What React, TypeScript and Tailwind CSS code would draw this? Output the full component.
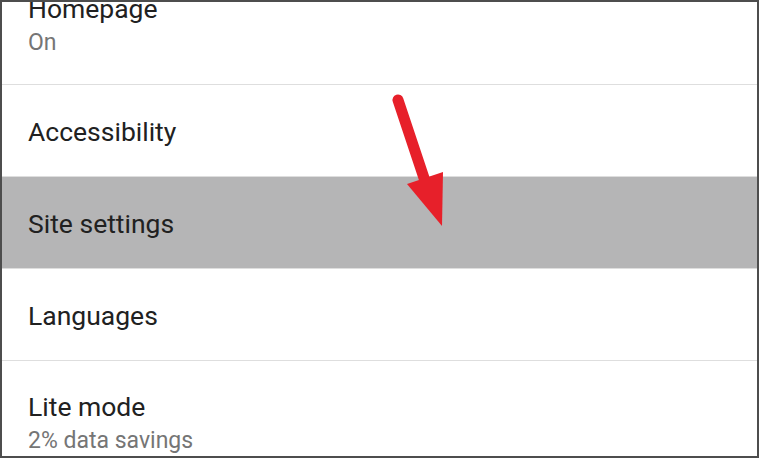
import React from 'react';

type Row = { title: string; subtitle?: string; active?: boolean };

const rows: Row[] = [
  { title: 'Homepage', subtitle: 'On' },
  { title: 'Accessibility' },
  { title: 'Site settings', active: true },
  { title: 'Languages' },
  { title: 'Lite mode', subtitle: '2% data savings' },
];

function SettingsRow({ title, subtitle, active }: Row) {
  if (subtitle) {
    return (
      <div className="h-[122px] pt-[30px] pl-[26px] border-b border-[#dedede] bg-white">
        <div className="text-[26.5px] leading-[32px] text-[#212121]">{title}</div>
        <div className="mt-[2px] text-[23px] leading-[32px] text-[#757575]">{subtitle}</div>
      </div>
    );
  }
  return (
    <div
      className={`h-[92px] pt-[31px] pl-[26px] border-b border-[#dedede] ${
        active ? 'bg-[#b5b5b6]' : 'bg-white'
      }`}
    >
      <div className="text-[26.5px] leading-[32px] text-[#212121]">{title}</div>
    </div>
  );
}

export default function App() {
  return (
    <div
      className="relative w-[759px] h-[458px] overflow-hidden border-2 border-[#4d4d4d] bg-white"
      style={{ fontFamily: 'Roboto, "Noto Sans", sans-serif' }}
    >
      <div className="-mt-[39px]">
        {rows.map((r) => (
          <SettingsRow key={r.title} {...r} />
        ))}
      </div>

      <svg
        className="absolute -left-[2px] -top-[2px] pointer-events-none"
        width="759"
        height="458"
        viewBox="0 0 759 458"
      >
        <line
          x1="398"
          y1="100"
          x2="424"
          y2="178"
          stroke="#e7202a"
          strokeWidth="11"
          strokeLinecap="round"
        />
        <polygon points="407,184 443,172 442,226" fill="#e7202a" />
      </svg>
    </div>
  );
}
